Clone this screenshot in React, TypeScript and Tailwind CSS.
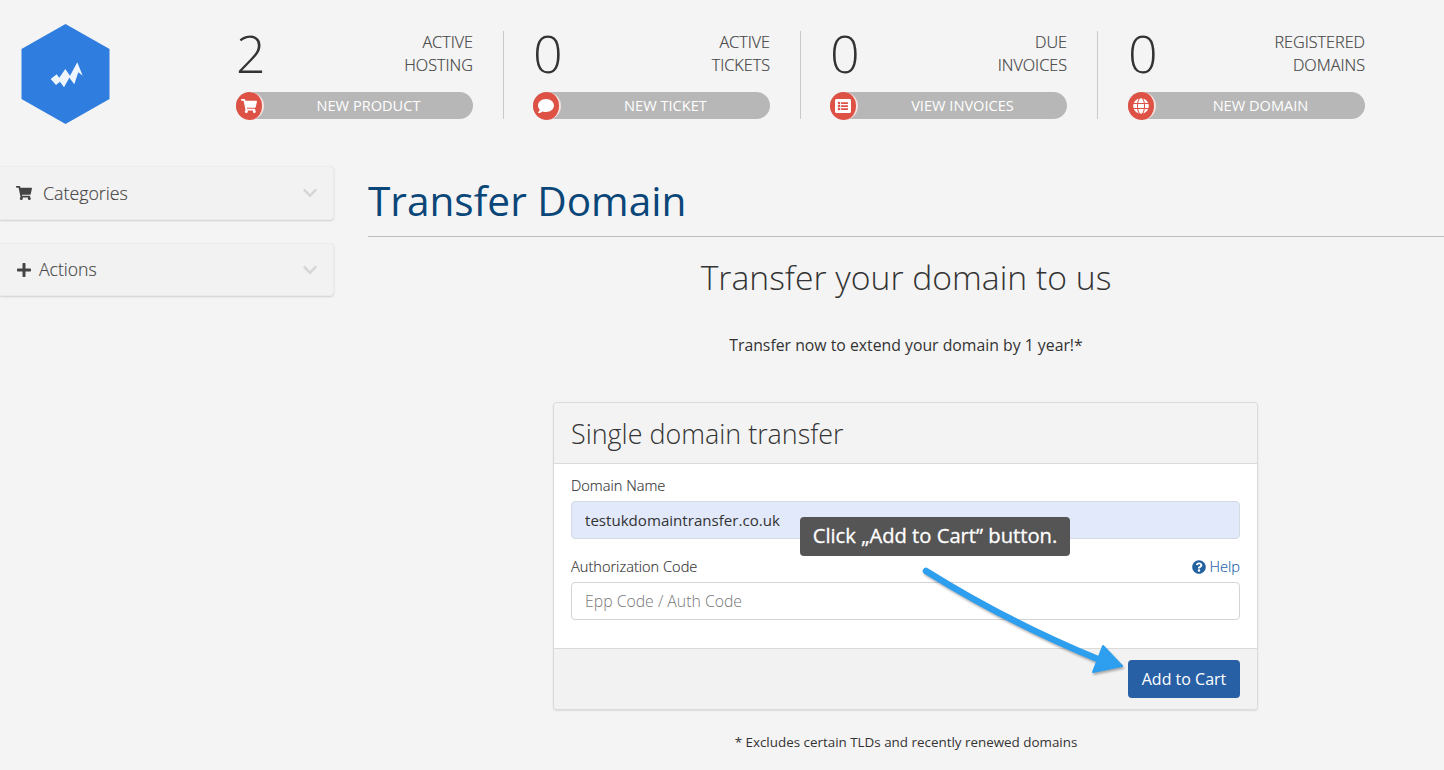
import { FC, ReactNode } from "react";
import {
  FaShoppingCart,
  FaComment,
  FaListAlt,
  FaGlobe,
  FaPlus,
  FaChevronDown,
  FaQuestionCircle,
} from "react-icons/fa";

interface StatProps {
  value: string;
  top: string;
  bottom: string;
  action: string;
  icon: ReactNode;
  cls: string;
}

const Stat: FC<StatProps> = ({ value, top, bottom, action, icon, cls }) => {
  return (
    <div className={cls}>
      <div className="w-[237px] h-[88px]">
        <div className="flex justify-between h-[61px]">
          <span className="text-[52px] leading-[48px] font-light text-[#333] -mt-[2px]">{value}</span>
          <div className="text-right text-[16.2px] leading-[23px] text-[#444] font-light [-webkit-text-stroke:0.2px_#444]">
            <div>{top}</div>
            <div>{bottom}</div>
          </div>
        </div>
        <div className="relative h-[27px] bg-[#b7b7b7] rounded-full flex items-center justify-center pl-[28px] text-[14.6px] text-white">
          {action}
          <span className="absolute left-0 top-0 w-[28px] h-[28px] rounded-full bg-[#de5246] border-r-2 border-[#f5e3df] flex items-center justify-center text-white text-[16px]">
            {icon}
          </span>
        </div>
      </div>
    </div>
  );
};

const SidePanel: FC<{ icon: ReactNode; label: string; h: string; iconW: string; size: string }> = ({
  icon,
  label,
  h,
  iconW,
  size,
}) => {
  return (
    <div className={`${h} flex items-center bg-[#f2f2f2] border border-l-0 border-[#ebebeb] rounded-r shadow-[0_1px_2px_rgba(0,0,0,0.15)] pl-4 pr-[15px]`}>
      <span className={`${iconW} text-[#444] text-[16px] shrink-0`}>{icon}</span>
      <span className={`${size} flex-1 font-light text-[#444] [-webkit-text-stroke:0.15px_#444]`}>{label}</span>
      <FaChevronDown className="text-[#d6d6d6] text-[16px]" />
    </div>
  );
};

const App: FC = () => {
  return (
    <div className="w-[1444px] h-[770px] overflow-hidden bg-[#f4f4f4] font-['Open_Sans',sans-serif] text-[#333]">
      <header className="h-[166px] flex">
        <div className="w-[236px] pl-[21px] pt-[23px] shrink-0">
          <svg width="90" height="102" viewBox="0 0 90 102">
            <polygon points="44.5,1 88.5,26 88.5,76 44.5,101 0.5,76 0.5,26" fill="#2f7ddf" />
            <polygon
              points="29.7,56 35.7,51.3 38.3,54.7 44.3,46 49,52.7 56.3,39.3 61.7,52.7 57.3,49.3 53.3,61.3 48.3,54.7 43,64.3 39,58.7 35,62"
              fill="#eef5fd"
            />
          </svg>
        </div>
        <div className="flex pt-[31px] items-start">
          <Stat
            cls="w-[268px] mr-[29px] border-r border-[#c9c9c9] pr-[30px]"
            value="2"
            top="ACTIVE"
            bottom="HOSTING"
            action="NEW PRODUCT"
            icon={<FaShoppingCart />}
          />
          <Stat
            cls="w-[268px] mr-[29px] border-r border-[#c9c9c9] pr-[30px]"
            value="0"
            top="ACTIVE"
            bottom="TICKETS"
            action="NEW TICKET"
            icon={<FaComment />}
          />
          <Stat
            cls="w-[268px] mr-[30px] border-r border-[#c9c9c9] pr-[30px]"
            value="0"
            top="DUE"
            bottom="INVOICES"
            action="VIEW INVOICES"
            icon={<FaListAlt />}
          />
          <Stat
            cls="w-[237px]"
            value="0"
            top="REGISTERED"
            bottom="DOMAINS"
            action="NEW DOMAIN"
            icon={<FaGlobe />}
          />
        </div>
      </header>

      <div className="flex">
        <aside className="w-[334px] shrink-0 flex flex-col gap-[23px]">
          <SidePanel icon={<FaShoppingCart />} label="Categories" h="h-[54px]" iconW="w-[27px]" size="text-[17.8px]" />
          <SidePanel icon={<FaPlus />} label="Actions" h="h-[53px]" iconW="w-[23px]" size="text-[17.6px]" />
        </aside>

        <main className="ml-[34px] flex-1">
          <h1 className="h-[71px] border-b border-[#bdbdbd] text-[40.6px] leading-[70px] text-[#0b4679]">
            Transfer Domain
          </h1>
          <h2 className="mt-[18px] text-center text-[33.7px] leading-[44px] font-light text-[#333]">
            Transfer your domain to us
          </h2>
          <p className="mt-[35px] text-center text-[15.8px] leading-[22px] text-[#333]">
            Transfer now to extend your domain by 1 year!*
          </p>

          <div className="relative mt-[46px] w-[705px] border border-[#dadada] rounded bg-white shadow-[0_1px_2px_rgba(0,0,0,0.1)] ml-[185px]">
            <div className="h-[61px] bg-[#f3f3f3] border-b border-[#dadada] rounded-t px-[17px] text-[26.9px] leading-[62px] font-light text-[#333]">
              Single domain transfer
            </div>
            <div className="px-[17px] h-[184px]">
              <label className="block pt-[11px] text-[14.6px] leading-[20px] font-light text-[#333] [-webkit-text-stroke:0.15px_#333]">
                Domain Name
              </label>
              <input
                readOnly
                value="testukdomaintransfer.co.uk"
                className="mt-[6px] w-full h-[38px] px-[13px] bg-[#e1e9fb] border border-[#d5d9e2] rounded text-[15.1px] text-[#333] outline-none"
              />
              <div className="mt-[18px] flex justify-between items-center h-[20px] text-[14.6px]">
                <span className="font-light text-[#333] [-webkit-text-stroke:0.15px_#333]">Authorization Code</span>
                <span className="flex items-center gap-[4px] font-light text-[#1f63ad] [-webkit-text-stroke:0.15px_#1f63ad]">
                  <FaQuestionCircle className="text-[#22609f] text-[14px]" />
                  Help
                </span>
              </div>
              <input
                readOnly
                placeholder="Epp Code / Auth Code"
                className="mt-[5px] w-full h-[38px] px-[13px] bg-white border border-[#d4d4d4] rounded text-[15.8px] font-light outline-none placeholder:text-[#777]"
              />
            </div>
            <div className="h-[61px] bg-[#f2f2f2] border-t border-[#dadada] rounded-b flex justify-end items-start pt-[11px] px-[17px]">
              <button className="w-[112px] h-[38px] rounded bg-[#2860a6] text-white text-[16px]">Add to Cart</button>
            </div>

            <div className="absolute left-[246px] top-[114px] w-[270px] h-[39px] rounded bg-[#555555] text-white text-[20.2px] leading-[37px] font-medium text-center [-webkit-text-stroke:0.3px_#fff]">
              Click „Add to Cart” button.
            </div>
            <svg
              className="absolute left-[360px] top-[155px] drop-shadow-[1px_2px_1px_rgba(0,0,0,0.3)]"
              width="220"
              height="125"
              viewBox="0 0 220 125"
            >
              <path d="M12,13 C60,43 120,75 186,102" fill="none" stroke="#2e9fee" strokeWidth="6.5" strokeLinecap="round" />
              <polygon points="189,88 208,108 179,114" fill="#2e9fee" stroke="#2e9fee" strokeWidth="2" strokeLinejoin="round" />
            </svg>
          </div>
          <p className="mt-[23px] text-center text-[13.4px] leading-[18px] text-[#333]">
            * Excludes certain TLDs and recently renewed domains
          </p>
        </main>
      </div>
    </div>
  );
};

export default App;
